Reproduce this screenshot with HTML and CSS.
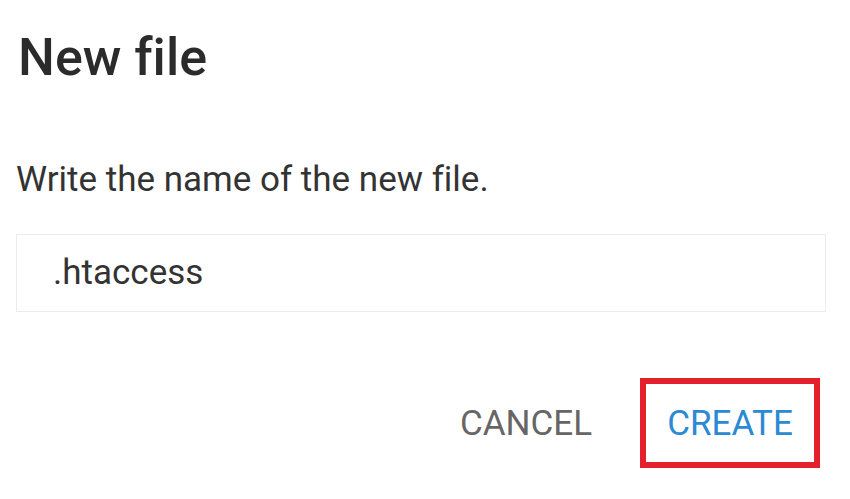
FILE: index.html
```html
<!DOCTYPE html>
<html lang="en">
<head>
    <meta charset="UTF-8">
    <title>New file</title>
    <link rel="stylesheet" href="styles.css">
</head>
<body>
    <div class="dialog">
        <h1 class="dialog-title">New file</h1>
        <p class="dialog-text">Write the name of the new file.</p>
        <div class="field">.htaccess</div>
        <div class="actions">
            <button class="btn btn-cancel">CANCEL</button>
            <button class="btn btn-create">CREATE</button>
        </div>
    </div>
</body>
</html>
```

FILE: styles.css
```css
body {
    margin: 0;
    background-color: #fff;
    font-family: Roboto, 'Liberation Sans', sans-serif;
    font-variant-ligatures: none;
}
.dialog {
    width: 850px;
    height: 499px;
    padding: 0 24px 0 16px;
    box-sizing: border-box;
}
.dialog-title {
    margin: 0;
    padding-top: 22px;
    padding-left: 2px;
    font-size: 52px;
    font-weight: 500;
    line-height: 72px;
    color: #2b2b2b;
}
.dialog-text {
    margin: 66px 0 0 0;
    font-size: 35px;
    line-height: 40px;
    color: #333;
}
.field {
    margin-top: 34px;
    height: 76px;
    border: 1px solid #ececec;
    padding-left: 36px;
    font-size: 35px;
    line-height: 76px;
    color: #333;
}
.actions {
    display: flex;
    justify-content: flex-end;
    align-items: center;
    margin-top: 66px;
    padding-right: 6px;
    gap: 48px;
}
.btn {
    background: none;
    border: none;
    font-family: inherit;
    font-size: 35px;
    padding: 0;
    cursor: pointer;
}
.btn-cancel {
    color: #666;
}
.btn-create {
    color: #2b8ad4;
    border: 6px solid #e3202c;
    width: 180px;
    height: 90px;
    box-sizing: border-box;
}
```
